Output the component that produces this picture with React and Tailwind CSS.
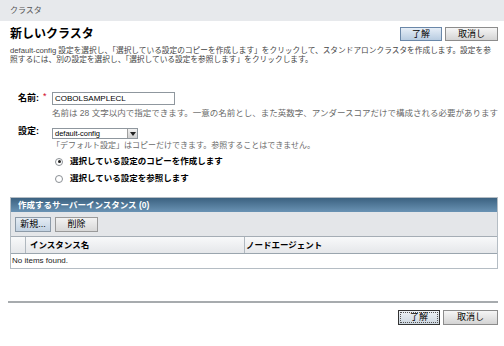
function Btn({ children, className }) {
  return (
    <div
      className={
        "h-[14px] flex items-center justify-center text-[9px] leading-none text-black border " +
        className
      }
    >
      {children}
    </div>
  );
}

function Radio({ checked, children }) {
  return (
    <div className="h-[11px] flex items-center pl-[55px]">
      <div className="w-[8px] h-[8px] rounded-full border border-[#8a8f94] bg-white flex items-center justify-center">
        {checked && <div className="w-[3px] h-[3px] rounded-full bg-[#222]" />}
      </div>
      <div className="ml-[7px] text-[8.5px] font-bold text-black leading-none whitespace-nowrap">
        {children}
      </div>
    </div>
  );
}

export default function App() {
  return (
    <div className="w-[504px] h-[346px] bg-white overflow-hidden font-['Liberation_Sans','Noto_Sans_CJK_JP',sans-serif] text-[#333]">
      <div className="h-[21px] bg-[#e7e9ec] flex items-center pl-[10px] text-[8px] text-[#555] leading-none">
        クラスタ
      </div>

      <div className="mt-[6px] h-[14px] flex items-center justify-between pl-[10px] pr-[6px]">
        <div className="text-[12px] font-bold text-black leading-none">新しいクラスタ</div>
        <div className="flex gap-[3px]">
          <Btn className="w-[42px] border-[#6a87a8] bg-gradient-to-b from-[#e6eef7] to-[#b8cce1]">了解</Btn>
          <Btn className="w-[53px] border-[#8c8c8c] bg-gradient-to-b from-[#f6f6f6] to-[#d4d4d4]">取消し</Btn>
        </div>
      </div>

      <div className="mt-[5px] pl-[10px] text-[7.7px] leading-[9px] text-[#444] whitespace-nowrap">
        default-config 設定を選択し、「選択している設定のコピーを作成します」をクリックして、スタンドアロンクラスタを作成します。設定を参
        <br />
        照するには、別の設定を選択し、「選択している設定を参照します」をクリックします。
      </div>

      <div className="mt-[28px] h-[13px] flex items-center">
        <div className="w-[43px] pl-[18px] text-[9px] font-bold text-black leading-none">名前:</div>
        <div className="w-[9px] self-start text-[9px] text-[#d0021b] leading-none">*</div>
        <div className="w-[123px] h-[13px] border border-[#8f979e] bg-white flex items-center pl-[2px] text-[8px] text-black leading-none">
          COBOLSAMPLECL
        </div>
      </div>
      <div className="mt-[3px] pl-[52px] h-[10px] text-[8.5px] leading-[10px] text-[#6a6a6a] whitespace-nowrap">
        名前は 28 文字以内で指定できます。一意の名前とし、また英数字、アンダースコアだけで構成される必要があります
      </div>

      <div className="mt-[9px] h-[13px] flex items-center">
        <div className="w-[52px] pl-[18px] text-[9px] font-bold text-black leading-none self-start">設定:</div>
        <div className="w-[86px] h-[11px] border border-[#8f979e] bg-white flex items-center text-[7.5px] text-black leading-none">
          <div className="flex-1 pl-[2px]">default-config</div>
          <div className="w-[10px] h-[9px] bg-gradient-to-b from-[#f2f2f2] to-[#d0d0d0] border-l border-[#a0a0a0] flex items-center justify-center">
            <svg width="6" height="4" viewBox="0 0 6 4">
              <path d="M0 0 L6 0 L3 4 Z" fill="#222" />
            </svg>
          </div>
        </div>
      </div>
      <div className="mt-[1px] pl-[52px] h-[10px] text-[8px] leading-[10px] text-[#6a6a6a] whitespace-nowrap">
        「デフォルト設定」はコピーだけできます。参照することはできません。
      </div>

      <div className="mt-[5px]">
        <Radio checked>選択している設定のコピーを作成します</Radio>
        <div className="h-[6px]" />
        <Radio>選択している設定を参照します</Radio>
      </div>

      <div className="mt-[13px] ml-[10px] mr-[6px] border border-[#b5bdc4]">
        <div className="h-[14px] bg-gradient-to-b from-[#3c6281] to-[#6a93b4] flex items-center pl-[7px] text-white font-bold text-[8.5px] leading-none">
          作成するサーバーインスタンス (0)
        </div>
        <div className="h-[25px] bg-[#e4e6e9] border-b border-[#a5adb5] flex items-center pl-[4px] gap-[4px]">
          <Btn className="w-[36px] h-[15px] border-[#8c9aa8] bg-gradient-to-b from-[#e4ecf4] to-[#c2d2e2]">新規...</Btn>
          <Btn className="w-[43px] h-[15px] border-[#9a9a9a] bg-gradient-to-b from-[#f2f2f2] to-[#d8d8d8] text-[#444]">削除</Btn>
        </div>
        <div className="h-[17px] flex bg-gradient-to-b from-[#f8f9fa] to-[#e5e7ea] border-b border-[#9aa5ae] text-[8.5px] font-bold text-black leading-none">
          <div className="w-[15px] border-r border-[#b0b8bf]" />
          <div className="w-[219px] border-r border-[#b0b8bf] flex items-center pl-[4px]">インスタンス名</div>
          <div className="flex-1 flex items-center pl-[1px]">ノードエージェント</div>
        </div>
        <div className="h-[14px] flex items-center pl-[1px] text-[8px] text-[#222] leading-none bg-white">
          No items found.
        </div>
      </div>

      <div className="mt-[32px] ml-[8px] mr-[6px] h-[2px] bg-[#a7abae]" />

      <div className="mt-[7px] flex justify-end gap-[3px] pr-[6px]">
        <div className="w-[42px] h-[15px] border border-[#333] bg-gradient-to-b from-[#eef2f6] to-[#cdd6df] p-[1px]">
          <div className="w-full h-full border border-dotted border-[#555] flex items-center justify-center text-[9px] leading-none text-black">
            了解
          </div>
        </div>
        <Btn className="w-[55px] h-[15px] border-[#8c8c8c] bg-gradient-to-b from-[#f6f6f6] to-[#d4d4d4]">取消し</Btn>
      </div>
    </div>
  );
}
